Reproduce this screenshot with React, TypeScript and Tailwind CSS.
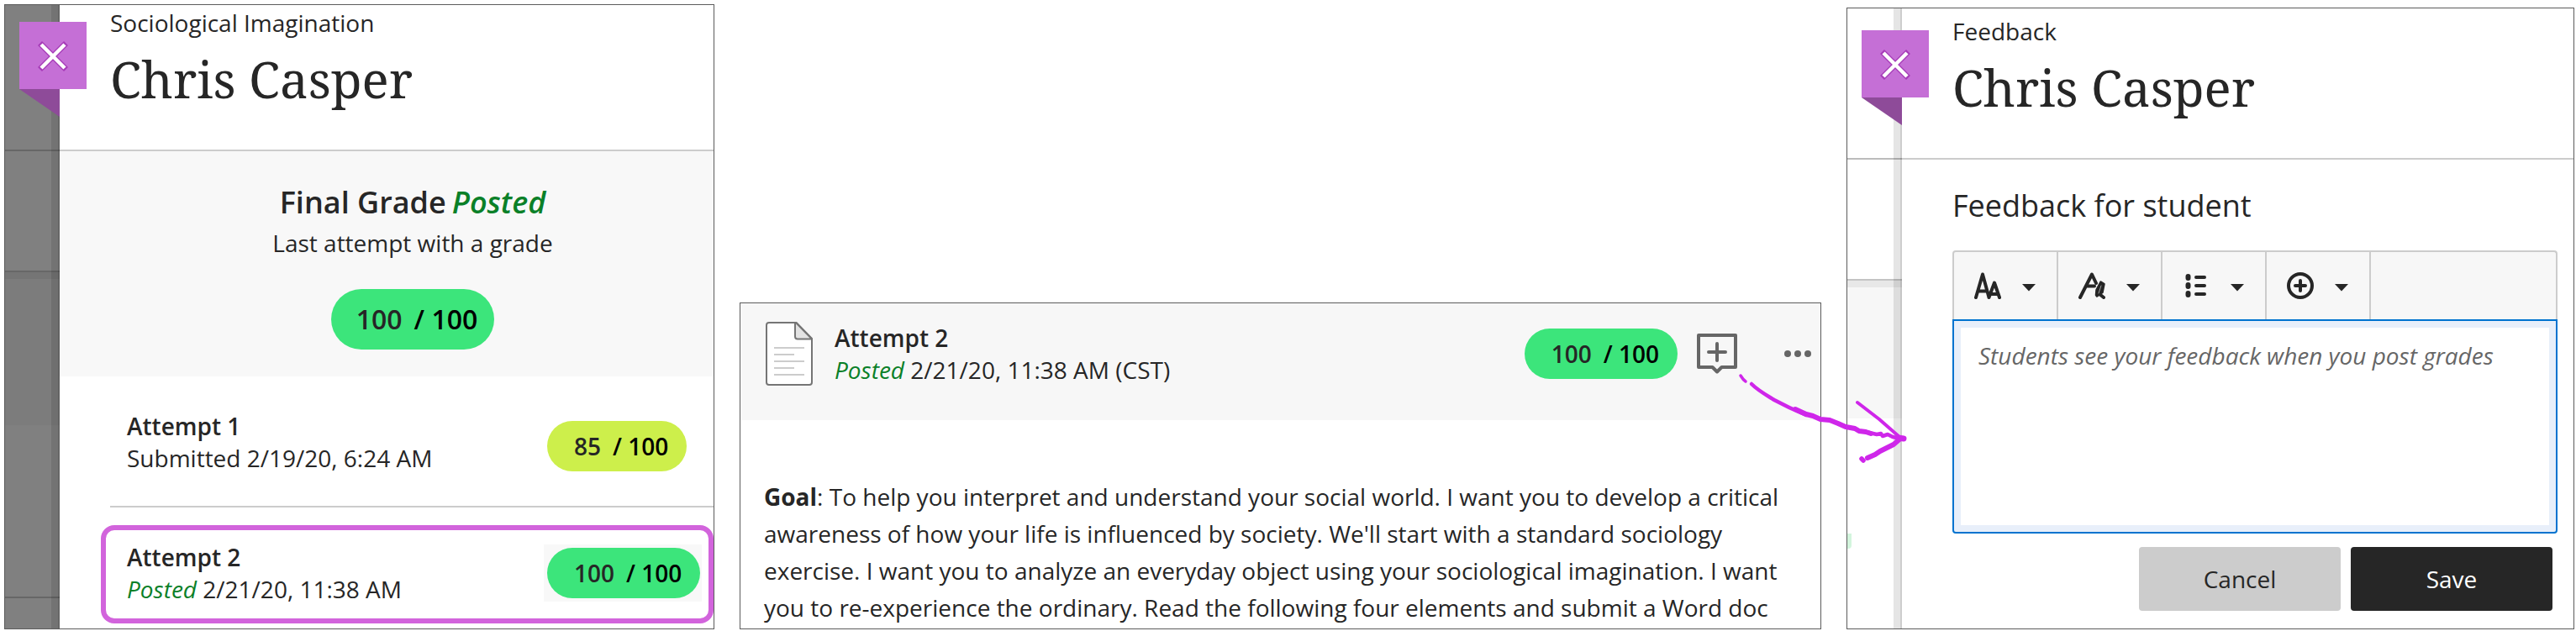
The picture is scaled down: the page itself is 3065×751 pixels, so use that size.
import type { ReactNode } from "react";

function Score({ value, large = false, lime = false }: { value: number; large?: boolean; lime?: boolean }) {
  const size = large ? "h-[72px] pl-[30px] pr-5 text-[32px]" : "h-15 pl-8 pr-[22px] text-[28px]";
  const color = lime ? "bg-[#cdef4b]" : "bg-[#3ce57b]";
  return (
    <span className={`inline-flex items-center gap-[14px] rounded-full leading-none font-semibold whitespace-nowrap ${size} ${color}`}>
      <span>{value}</span>
      <span className="text-black">/ 100</span>
    </span>
  );
}

function Ribbon({ className }: { className: string }) {
  return (
    <div className={`absolute left-[17px] ${className}`}>
      <button type="button" aria-label="Close" className="block size-20 bg-[#c56fd6]">
        <svg viewBox="0 0 80 80" className="size-20" fill="none">
          <path d="M24.500 25.500L55.500 56.500M55.500 25.500L24.500 56.500" stroke="#a63ab8" strokeWidth="7" />
          <path d="M26 27L54 55M54 27L26 55" stroke="#fff" strokeWidth="4.500" />
        </svg>
      </button>
      <svg viewBox="0 0 48 33" className="block h-[33px] w-12">
        <path d="M0 0H48V33Z" fill="#8e4b99" />
      </svg>
    </div>
  );
}

function Strip({ children }: { children: ReactNode }) {
  return (
    <div aria-hidden="true" className="relative flex w-[65px] shrink-0 flex-col">
      {children}
      <div className="absolute inset-y-0 right-0 w-2.5 border-r-2 border-black/10 bg-black/10" />
    </div>
  );
}

function Title({ small, name, className }: { small: string; name: string; className: string }) {
  return (
    <header className={`border-b-2 border-[#cccccc] pb-[42px] pl-[60px] ${className}`}>
      <p className="leading-[38px]">{small}</p>
      <h1 className="mt-1.5 font-['Noto_Serif','DejaVu_Serif_Condensed','DejaVu_Serif',serif] text-[60px] leading-[84px]">{name}</h1>
    </header>
  );
}

function GradePanel() {
  return (
    <section className="relative flex overflow-hidden border border-[#5c5c5c] bg-white">
      <Strip>
        <div className="h-[172px] bg-[#808080]" />
        <div className="h-0.5 bg-[#676767]" />
        <div className="h-[142px] bg-[#808080]" />
        <div className="h-0.5 bg-[#676767]" />
        <div className="h-2 bg-[#757575]" />
        <div className="h-[174px] bg-[#7c7c7c]" />
        <div className="h-[204px] bg-[#808080]" />
        <div className="h-0.5 bg-[#676767]" />
        <div className="flex-1 bg-[#808080]" />
      </Strip>
      <Ribbon className="top-5" />
      <div className="min-w-0 flex-1 pb-1.5">
        <Title small="Sociological Imagination" name="Chris Casper" className="pt-0.5" />
        <div className="flex flex-col items-center bg-[#f8f8f8] pt-9 pb-8 pl-[62px]">
          <h2 className="flex gap-[7px] text-[36px] leading-[50px] font-semibold">
            <span>Final Grade</span>
            <em className="text-[#0a8028]">Posted</em>
          </h2>
          <p className="mt-1 mb-9 leading-[38px]">Last attempt with a grade</p>
          <Score value={100} large />
        </div>
        <div className="ml-[60px] grid grid-cols-[1fr_198px] items-center border-b-2 border-[#cccccc] pt-10 pb-[38px] pl-5">
          <div className="leading-[38px] whitespace-nowrap">
            <h3 className="font-semibold">Attempt 1</h3>
            <p>Submitted 2/19/20, 6:24 AM</p>
          </div>
          <div className="flex pt-2.5">
            <Score value={85} lime />
          </div>
        </div>
        <div className="mt-[21px] ml-[49px] grid grid-cols-[1fr_196px] items-center rounded-2xl border-6 border-[#d264dc] pt-[13px] pb-4 pl-[25px]">
          <div className="leading-[38px] whitespace-nowrap">
            <h3 className="font-semibold">Attempt 2</h3>
            <p>
              <em className="text-[#0a8028]">Posted</em> 2/21/20, 11:38 AM
            </p>
          </div>
          <div className="flex justify-self-start bg-[#f8f8f8] py-1 pr-0.5 pl-1">
            <Score value={100} />
          </div>
        </div>
      </div>
    </section>
  );
}

function AttemptPanel() {
  return (
    <section className="overflow-hidden border border-[#5c5c5c] bg-white">
      <header className="flex items-center bg-[#f7f7f7] pt-[22px] pr-[11px] pb-[41px] pl-[30px]">
        <svg viewBox="0 0 56 76" className="h-[76px] w-14 shrink-0" fill="none">
          <path d="M4 1H36.500L55 20V72Q55 75 52 75H4Q1 75 1 72V4Q1 1 4 1Z" fill="#fff" stroke="#757575" strokeWidth="2" strokeLinejoin="round" />
          <path d="M36 1L55 20.500H38Q35 20.500 35 17.500V1Z" fill="#e3e3e3" stroke="#757575" strokeWidth="2" strokeLinejoin="round" />
          <path d="M10 31H46M10 39H34M10 47H46M10 55H34M10 63H46" stroke="#cccccc" strokeWidth="2" />
        </svg>
        <div className="ml-[26px] flex-1 leading-[38px] whitespace-nowrap">
          <h2 className="font-semibold">Attempt 2</h2>
          <p>
            <em className="text-[#0a8028]">Posted</em> 2/21/20, 11:38 AM (CST)
          </p>
        </div>
        <Score value={100} />
        <button type="button" aria-label="Add feedback" className="ml-[23px]">
          <svg viewBox="0 0 48 48" className="size-12" fill="none" stroke="#666666" strokeWidth="4" strokeLinejoin="round">
            <path d="M2 2H46V40H29.500L24 45.500L18.500 40H2Z" />
            <path d="M24 12V32M14 22H34" strokeLinecap="round" />
          </svg>
        </button>
        <button type="button" aria-label="More options" className="ml-14">
          <svg viewBox="0 0 32 8" className="h-2 w-8" fill="#666666">
            <circle cx="4" cy="4" r="4" />
            <circle cx="16" cy="4" r="4" />
            <circle cx="28" cy="4" r="4" />
          </svg>
        </button>
      </header>
      <p className="pt-[69px] pr-10 pb-[3px] pl-7 leading-[44px]">
        <strong className="font-bold">Goal</strong>: To help you interpret and understand your social world. I want you to develop a critical
        awareness of how your life is influenced by society. We'll start with a standard sociology exercise. I want you
        to analyze an everyday object using your sociological imagination. I want you to re-experience the ordinary.
        Read the following four elements and submit a Word doc
      </p>
    </section>
  );
}

function Tool({ label, children }: { label: string; children: ReactNode }) {
  return (
    <button type="button" aria-label={label} className="flex h-20 w-31 items-center gap-[25px] border-r-2 border-[#cccccc] pl-6">
      <svg viewBox="0 0 32 32" className="size-8 shrink-0" fill="none" stroke="#262626" strokeWidth="4" strokeLinecap="round" strokeLinejoin="round">
        {children}
      </svg>
      <svg viewBox="0 0 16 32" className="h-8 w-4 shrink-0" fill="#262626">
        <path d="M0 14H16L8 22.500Z" />
      </svg>
    </button>
  );
}

function Arrow() {
  return (
    <svg
      viewBox="0 0 210 120"
      aria-hidden="true"
      className="pointer-events-none absolute top-[431px] -left-[137px] h-[120px] w-[210px]"
      fill="none"
      stroke="#cf26ea"
      strokeLinecap="round"
      strokeLinejoin="round"
    >
      <path d="M11 7Q14 12 17 14" strokeWidth="3.500" />
      <path d="M24 17C32 25 43 31 51 36C64 43 77 49 89 54" strokeWidth="4.500" />
      <path d="M76 47L89 53L97 55L106 59L117 60L127 64L136 68L147 70L152 73L160 74L166 76" strokeWidth="6" />
      <path d="M160 74L173 77L178 76L180 79L186 77L192 80L201 82" strokeWidth="4.500" />
      <path d="M150 39L176 59L200 80" strokeWidth="4" />
      <path d="M155 106L157 108" strokeWidth="5.500" />
      <path d="M162 105L171 101L177 97L185 93L193 89L200 83" strokeWidth="6" />
      <path d="M198 81L205 82" strokeWidth="7" />
    </svg>
  );
}

function FeedbackPanel() {
  return (
    <div className="relative">
      <section className="relative flex overflow-hidden border border-[#5c5c5c] bg-white">
        <Strip>
          <div className="h-[178px]" />
          <div className="h-0.5 bg-[#bcbcbc]" />
          <div className="h-[142px]" />
          <div className="h-0.5 bg-[#c4c4c4]" />
          <div className="h-2 bg-[#e8e8e8]" />
          <div className="h-[156px] bg-[#f7f7f7]" />
          <div className="h-[137px]" />
          <div className="h-[18px] w-[5px] rounded-br bg-[#d3f5dd]" />
        </Strip>
        <Ribbon className="top-[26px]" />
        <div className="min-w-0 flex-1">
          <Title small="Feedback" name="Chris Casper" className="pt-2" />
          <form className="pt-[30px] pr-[19px] pb-[21px] pl-[60px]" onSubmit={(e) => e.preventDefault()}>
            <label htmlFor="feedback" className="block text-[36px] leading-[50px]">
              Feedback for student
            </label>
            <div className="mt-7 flex rounded-t border-2 border-b-0 border-[#cccccc] bg-[#f7f7f7]">
              <Tool label="Text style">
                <path d="M2 30L10 2.500L17.500 30M5.500 22.500H14.500M17.500 30L24 12.500L30 30M20 26H28.500" />
              </Tool>
              <Tool label="Text format">
                <path d="M2 30L16 2.500L21 13M10 16.500H19M25 26L30 30" />
                <path d="M26.500 11.500L30.500 14L28.500 24L22 28.500L21 27L21.500 21Z" fill="#262626" strokeWidth="2.500" />
                <path d="M27 16L24 25" stroke="#a0a0a0" strokeWidth="1" />
              </Tool>
              <Tool label="Lists">
                <path d="M6.500 5V7M6.500 15V17M6.500 25V27" strokeWidth="6" />
                <path d="M16 6H26M16 16H26M16 26H26" />
              </Tool>
              <Tool label="Insert content">
                <circle cx="16" cy="16" r="14" />
                <path d="M16 10V22M10 16H22" />
              </Tool>
            </div>
            <textarea
              id="feedback"
              placeholder="Students see your feedback when you post grades"
              className="block h-[255px] w-full resize-none rounded-b border-2 border-[#0073cf] bg-white px-[29px] pt-[22px] leading-[38px] shadow-[inset_0_0_0_8px_#e8effa] outline-none placeholder:text-[#666666] placeholder:italic placeholder:opacity-100"
            />
            <div className="mt-4 mr-1.5 flex justify-end gap-3">
              <button type="button" className="h-19 w-60 rounded bg-[#cccccc]">
                Cancel
              </button>
              <button type="submit" className="h-19 w-60 rounded bg-[#262626] text-white">
                Save
              </button>
            </div>
          </form>
        </div>
      </section>
      <Arrow />
    </div>
  );
}

export default function App() {
  return (
    <main className="grid grid-cols-[845fr_1287fr_866fr] items-end gap-[30px] bg-white pt-[5px] pr-0.5 pb-0.5 pl-[5px] font-['Open_Sans','Noto_Sans',sans-serif] text-[28px] text-[#262626]">
      <GradePanel />
      <AttemptPanel />
      <FeedbackPanel />
    </main>
  );
}
